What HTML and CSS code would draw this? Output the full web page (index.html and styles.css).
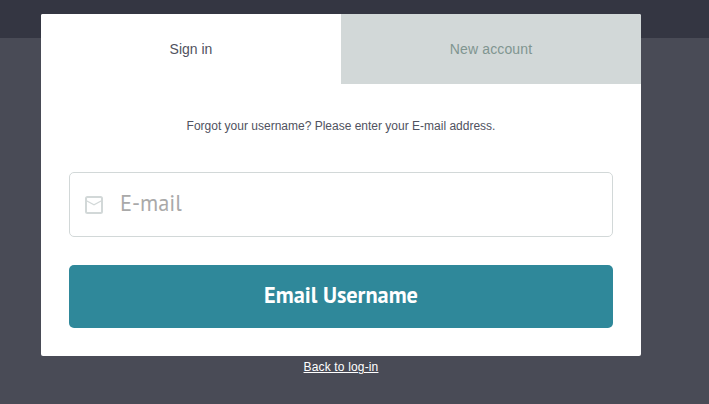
FILE: index.html
```html
<!DOCTYPE html>
<html lang="en">
<head>
<meta charset="utf-8">
<title>Sign in</title>
<link rel="stylesheet" href="styles.css">
</head>
<body>
<main class="dialog">
  <nav class="tabs">
    <a class="tab tab-active">Sign in</a>
    <a class="tab tab-new">New account</a>
  </nav>
  <form class="form">
    <p class="message">Forgot your username? Please enter your E-mail address.</p>
    <label class="field">
      <svg class="icon" width="18" height="18" viewBox="0 0 18 18" fill="none" stroke="#d2d8d8">
        <rect x="1" y="1" width="16" height="16" rx="1.5" stroke-width="2"/>
        <path d="M1 4.5L9 8.8L17 4.5" stroke-width="1.2"/>
      </svg>
      <span class="placeholder">E-mail</span>
    </label>
    <button class="submit" type="button">Email Username</button>
  </form>
</main>
<footer class="back"><a class="back-link">Back to log-in</a></footer>
</body>
</html>
```
FILE: styles.css
```css
* { box-sizing: border-box; }
body {
  margin: 0;
  height: 404px;
  padding: 14px 68px 0 41px;
  overflow: hidden;
  background: linear-gradient(#343642 38px, #494b56 38px);
  font-family: "Liberation Sans", Arial, sans-serif;
  color: #505260;
}
.dialog { width: 600px; height: 342px; background: #fff; border-radius: 2px; overflow: hidden; }
.tabs { display: flex; height: 70px; }
.tab { flex: 1; background: #d2d8d8; color: #809590; font-size: 14px; line-height: 70px; text-align: center; }
.tab-active { background: #fff; color: #505260; }
.tab-new { letter-spacing: 0.15px; }
.form { padding: 34px 28px 28px; }
.message { margin: 0 0 38px; font-size: 12px; line-height: 16px; text-align: center; white-space: nowrap; }
.field { display: flex; align-items: center; height: 65px; padding-left: 15px; border: 1px solid #d2d8d8; border-radius: 5px; }
.placeholder { margin-left: 17px; padding-bottom: 4px; font-family: "PT Sans", "Noto Sans", sans-serif; font-size: 22.4px; color: #a9a9a9; }
.submit { display: block; width: 100%; height: 63px; margin-top: 28px; padding: 0 0 4px; border: 0; border-radius: 5px; background: #2f889a; color: #fff; font: bold 22.3px "PT Sans", "Noto Sans", sans-serif; }
.back { width: 600px; padding-top: 3px; text-align: center; font-size: 12px; line-height: 16px; }
.back-link { color: #fff; text-decoration: underline; letter-spacing: 0.16px; }
```
